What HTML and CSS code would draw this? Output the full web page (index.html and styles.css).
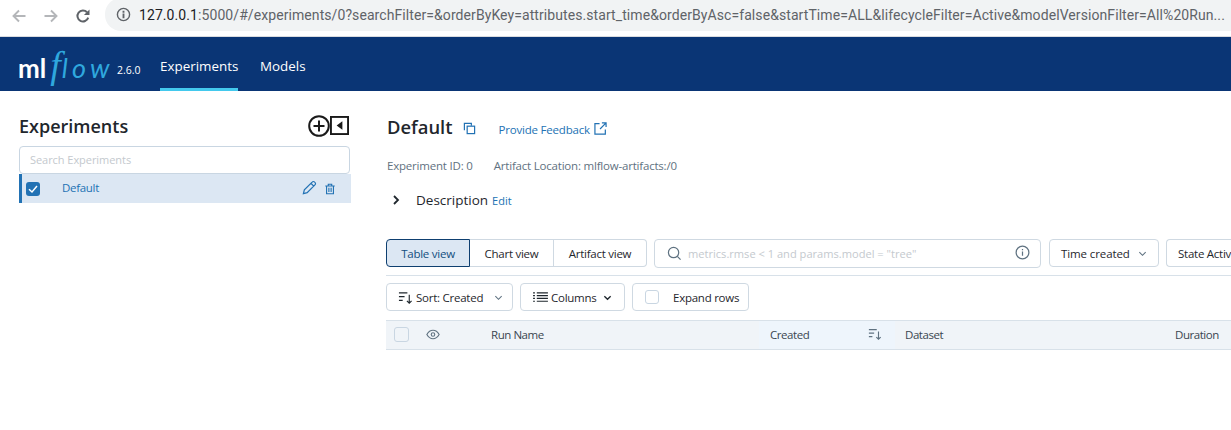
FILE: index.html
```html
<!DOCTYPE html>
<html lang="en">
<head>
<meta charset="utf-8">
<title>MLflow</title>
<link rel="stylesheet" href="styles.css">
</head>
<body>
<div class="chrome">
  <svg class="nav-icon" viewBox="0 0 16 16"><path d="M14.5 8H2.5M8 2.5 2.5 8 8 13.5" class="st-light"/></svg>
  <svg class="nav-icon nav-fwd" viewBox="0 0 16 16"><path d="M1.5 8h12M8 2.5 13.5 8 8 13.5" class="st-light"/></svg>
  <svg class="nav-icon nav-reload" viewBox="0 0 16 16"><path d="M13.2 9.6A5.5 5.5 0 1 1 12 4.2" class="st-dark"/><path d="M14.5 1.5v5.6H8.9z" class="fill-dark"/></svg>
  <div class="omnibox">
    <svg class="info-icon" viewBox="0 0 16 16"><circle cx="8" cy="8" r="6.5" class="st-thin"/><path d="M7 7h2v5H7zM7 4h2v2H7z" class="fill-dark"/></svg>
    <span class="url"><span class="url-dark">127.0.0.1</span>:5000/#/experiments/0?searchFilter=&amp;orderByKey=attributes.start_time&amp;orderByAsc=false&amp;startTime=ALL&amp;lifecycleFilter=Active&amp;modelVersionFilter=All%20Run...</span>
  </div>
</div>
<header class="topbar">
  <div class="logo"><span class="logo-ml">ml</span><span class="logo-f">f</span><span class="logo-flow">low</span></div>
  <span class="version">2.6.0</span>
  <nav class="tabs">
    <a class="tab tab-active">Experiments</a>
    <a class="tab">Models</a>
  </nav>
</header>
<div class="page">
  <aside class="sidebar">
    <div class="side-head">
      <h2 class="side-title">Experiments</h2>
      <div class="side-actions">
        <svg class="plus-icon" viewBox="0 0 22 22"><circle cx="11" cy="11" r="9.8" class="st-black"/><path d="M11 5.5v11M5.5 11h11" class="st-black"/></svg>
        <svg class="collapse-icon" viewBox="0 0 20 20"><rect x="1" y="1" width="18" height="18" class="st-black"/><path d="M13 5.5v9L7 10z" class="fill-black"/></svg>
      </div>
    </div>
    <div class="side-search">Search Experiments</div>
    <div class="exp-row">
      <span class="check"><svg viewBox="0 0 14 14"><path d="M3 7.2 6 10l5-6" class="st-white"/></svg></span>
      <span class="exp-name">Default</span>
      <svg class="pencil" viewBox="0 0 16 16"><path d="M1.5 14.5 2.5 10.5 10.8 2.2a1.8 1.8 0 0 1 2.7 0l.3.3a1.8 1.8 0 0 1 0 2.7L5.500 13.500zM9.500 3.500l3 3" class="st-blue"/></svg>
      <svg class="trash" viewBox="0 0 14 14"><path d="M1.500 3.500h11M5 3.500V1.500h4v2M3 3.500v9h8v-9M5.700 5.500v5M8.300 5.500v5" class="st-blue"/></svg>
    </div>
  </aside>
  <main class="main">
    <div class="title-row">
      <h1 class="exp-title">Default</h1>
      <svg class="copy-icon" viewBox="0 0 14 14"><path d="M1.500 9V1.500H9V4" class="st-blue"/><rect x="4.500" y="4.500" width="8" height="8" class="st-blue"/></svg>
      <a class="feedback">Provide Feedback</a>
      <svg class="ext-icon" viewBox="0 0 14 14"><path d="M6 1.800H1v11.200h11.200V8M8.500 1h4.500v4.500M13 1 6.500 7.500" class="st-blue"/></svg>
    </div>
    <div class="meta"><span>Experiment ID: 0</span><span>Artifact Location: mlflow-artifacts:/0</span></div>
    <div class="desc">
      <svg class="chev-right" viewBox="0 0 10 10"><path d="M3 1l4 4-4 4" class="st-chev"/></svg>
      <span class="desc-label">Description</span><a class="edit">Edit</a>
    </div>
    <div class="toolbar">
      <div class="segments">
        <span class="segment segment-on">Table view</span>
        <span class="segment seg-chart">Chart view</span>
        <span class="segment seg-artifact">Artifact view</span>
      </div>
      <div class="run-search">
        <svg class="search-icon" viewBox="0 0 16 16"><circle cx="7" cy="7" r="5.500" class="st-grey"/><path d="M11 11l3.500 3.500" class="st-grey"/></svg>
        <span class="run-placeholder">metrics.rmse &lt; 1 and params.model = "tree"</span>
        <svg class="hint-icon" viewBox="0 0 16 16"><circle cx="8" cy="8" r="6.800" class="st-grey"/><path d="M8 7v4.500M8 4.200v1.300" class="st-grey"/></svg>
      </div>
      <span class="btn btn-time">Time created<svg class="chev" viewBox="0 0 10 10"><path d="M1.500 3.500 5 7l3.500-3.500" class="st-chev-thin"/></svg></span>
      <span class="btn btn-state">State Active</span>
    </div>
    <div class="controls">
      <span class="btn btn-sort">
        <svg class="sort-icon" viewBox="0 0 16 16"><path d="M1 3h9M1 7h6M1 11h4M12 5v9M9.500 11.500 12 14l2.500-2.500" class="st-dark-thin"/></svg>
        Sort: Created
        <svg class="chev chev-sort" viewBox="0 0 10 10"><path d="M1.500 3.500 5 7l3.500-3.500" class="st-chev-thin"/></svg>
      </span>
      <span class="btn btn-cols">
        <svg class="cols-icon" viewBox="0 0 16 14"><path d="M0 2h2M4 2h12M0 5h2M4 5h12M0 8h2M4 8h12M0 11h2M4 11h12" class="st-dark-thin"/></svg>
        Columns
        <svg class="chev" viewBox="0 0 10 10"><path d="M1.500 3.500 5 7l3.500-3.500" class="st-chev-bold"/></svg>
      </span>
      <span class="btn btn-expand"><span class="box"></span>Expand rows</span>
    </div>
    <div class="thead">
      <span class="cell cell-check"><span class="box box-head"></span></span>
      <span class="cell cell-eye"><svg class="eye" viewBox="0 0 16 12"><path d="M1 6c1.800-3.200 4.200-4.800 7-4.800s5.200 1.600 7 4.800c-1.800 3.200-4.200 4.800-7 4.800S2.800 9.200 1 6z" class="st-grey"/><circle cx="8" cy="6" r="2" class="st-grey"/></svg></span>
      <span class="cell cell-name">Run Name</span>
      <span class="cell cell-created">Created<svg class="sort-small" viewBox="0 0 16 16"><path d="M1 3h9M1 7h6M1 11h4M12 5v9M9.500 11.500 12 14l2.500-2.500" class="st-grey"/></svg></span>
      <span class="cell cell-dataset">Dataset</span>
      <span class="cell cell-duration">Duration</span>
    </div>
  </main>
</div>
</body>
</html>
```
FILE: styles.css
```css
* { box-sizing: border-box; }
html, body { margin: 0; padding: 0; }
body {
  width: 1231px;
  height: 430px;
  overflow: hidden;
  background: #fff;
  font-family: "Open Sans", "Noto Sans", sans-serif;
  color: #1f272d;
}
svg { display: block; flex: none; fill: none; }

.st-light { stroke: #b4b6b9; stroke-width: 1.9; }
.st-dark { stroke: #5f6368; stroke-width: 2; }
.st-thin { stroke: #5f6368; stroke-width: 1.5; }
.fill-dark { fill: #5f6368; }
.st-black { stroke: #1a1a1a; stroke-width: 2; }
.fill-black { fill: #1a1a1a; }
.st-white { stroke: #fff; stroke-width: 1.5; }
.st-blue { stroke: #2272b4; stroke-width: 1.300; }
.st-chev { stroke: #1f272d; stroke-width: 1.800; }
.st-chev-thin { stroke: #5f7281; stroke-width: 1.200; }
.st-chev-bold { stroke: #1f272d; stroke-width: 1.500; }
.st-grey { stroke: #5f7281; stroke-width: 1.300; }
.st-dark-thin { stroke: #1f272d; stroke-width: 1.200; }

/* browser chrome */
.chrome {
  height: 37px;
  display: flex;
  align-items: center;
  border-bottom: 1px solid #dadce0;
  padding-bottom: 5px;
}
.nav-icon { width: 16px; height: 16px; margin-left: 11px; }
.nav-fwd { margin-left: 16px; }
.nav-reload { margin-left: 16px; }
.omnibox {
  flex: 1;
  height: 33px;
  margin-left: 14px;
  padding-left: 11px;
  margin-top: -2px;
  margin-right: -40px;
  background: #f1f3f4;
  border-radius: 16px 0 0 16px;
  display: flex;
  align-items: center;
  overflow: hidden;
  white-space: nowrap;
}
.info-icon { width: 15px; height: 15px; flex: none; }
.url { margin-left: 8px; font-size: 14px; letter-spacing: .08px; color: #5f6368; font-family: Roboto, sans-serif; }
.url-dark { color: #202124; }

/* header */
.topbar {
  height: 54px;
  background: #0a3575;
  display: flex;
  align-items: center;
  padding-left: 18px;
  color: #fff;
}
.logo { display: flex; align-items: baseline; width: 99px; line-height: 1; margin-top: 2px; }
.logo-ml { font: 700 26px/1 Lato, sans-serif; color: #fff; }
.logo-f { font: italic 400 38px/1 "Liberation Serif", serif; color: #2fa8de; margin-left: 4px; }
.logo-flow { font: italic 400 27px/1 Lato, sans-serif; color: #2fa8de; letter-spacing: 4.200px; margin-left: 1px; }
.version { font-size: 10.500px; width: 43px; margin-top: 11px; }
.tabs { display: flex; align-self: stretch; }
.tab {
  display: flex;
  align-items: center;
  font-size: 13.400px;
  font-weight: 500;
  height: 54px;
  padding-top: 6px;
  margin-right: 22px;
  border-bottom: 3px solid transparent;
  color: #fff;
}
.tab-active { border-bottom-color: #43c9ed; width: 78px; }

/* layout */
.page { display: flex; }
.sidebar { width: 386px; padding: 20px 35px 0 19px; flex: none; }
.main { flex: 1; min-width: 0; overflow: hidden; padding-top: 22px; }

/* sidebar */
.side-head { display: flex; justify-content: space-between; align-items: center; height: 35px; padding-right: 2px; }
.side-title { margin: -6px 0 0; font-size: 18px; font-weight: 600; line-height: 30px; }
.side-actions { display: flex; align-items: center; margin-top: -6px; }
.plus-icon { width: 22px; height: 22px; }
.collapse-icon { width: 19px; height: 19px; }
.side-search {
  height: 28px;
  width: 331px;
  border: 1px solid #c9d6e2;
  border-radius: 4px;
  padding-left: 10px;
  font-size: 11px;
  line-height: 26px;
  letter-spacing: -.05px;
  color: #c4c9ce;
}
.exp-row {
  height: 29px;
  width: 332px;
  background: #dce7f3;
  border-left: 3px solid #2272b4;
  display: flex;
  align-items: center;
  color: #2272b4;
}
.check {
  width: 14px; height: 14px;
  margin-left: 4px;
  background: #2272b4;
  border-radius: 3px;
  display: flex;
}
.check svg { width: 14px; height: 14px; }
.exp-name { font-size: 11.500px; letter-spacing: -.3px; margin-left: 22px; margin-top: -2px; flex: 1; }
.pencil { width: 15px; height: 15px; margin-top: -2px; }
.trash { width: 12px; height: 12px; margin-left: 7px; margin-right: 15px; }

/* main */
.title-row { display: flex; align-items: center; height: 28px; }
.exp-title { margin: -2px 0 0; font-size: 18.400px; font-weight: 600; padding-left: 1px; }
.copy-icon { width: 13px; height: 13px; margin-left: 11px; margin-top: 3px; }
.feedback { font-size: 11.500px; letter-spacing: -.2px; color: #2272b4; margin-left: 22px; margin-top: 4px; }
.ext-icon { width: 13px; height: 13px; margin-left: 4px; margin-top: 2px; }
.meta { display: flex; gap: 21px; font-size: 11.500px; letter-spacing: -.2px; color: #5f7281; margin-top: 17px; line-height: 16px; padding-left: 1px; }
.desc { display: flex; align-items: center; height: 20px; margin-top: 16px; }
.chev-right { width: 10px; height: 10px; margin-left: 5px; }
.desc-label { font-size: 13.500px; margin-left: 15px; }
.edit { font-size: 11px; color: #2272b4; margin-left: 4px; }

.toolbar { display: flex; align-items: center; margin-top: 29px; width: 860px; height: 29px; padding-bottom: 1px; }
.segments { display: flex; height: 28px; font-size: 11.500px; letter-spacing: -.25px; white-space: nowrap; }
.segment {
  display: flex;
  align-items: center;
  justify-content: center;
  border: 1px solid #cfd9e2;
  border-left-width: 0;
}
.segment-on {
  width: 84px;
  background: #dce7f3;
  border: 1px solid #0e3f70;
  border-radius: 4px 0 0 4px;
  color: #134f7f;
}
.seg-chart { width: 84px; }
.seg-artifact { width: 93px; border-radius: 0 4px 4px 0; }
.run-search {
  width: 387px;
  height: 29px;
  margin-left: 7px;
  border: 1px solid #cfd9e2;
  border-radius: 4px;
  display: flex;
  align-items: center;
  padding: 0 10px 0 12px;
}
.search-icon { width: 15px; height: 15px; }
.run-placeholder { flex: 1; font-size: 11.100px; color: #c4c9ce; margin-left: 6px; white-space: nowrap; }
.hint-icon { width: 15px; height: 15px; margin-top: -2px; }
.btn {
  display: inline-flex;
  align-items: center;
  height: 28px;
  border: 1px solid #cfd9e2;
  border-radius: 4px;
  font-size: 11.500px;
  letter-spacing: -.25px;
  flex: none;
  white-space: nowrap;
}
.btn-time { width: 110px; margin-left: 8px; padding-left: 11px; gap: 8px; letter-spacing: -.1px; }
.btn-state { margin-left: 7px; padding-left: 11px; width: 65px; overflow: hidden; border-right: 0; border-radius: 4px 0 0 4px; }
.chev { width: 9px; height: 9px; }

.controls {
  display: flex;
  gap: 7px;
  border-top: 1px solid #d8e1e9;
  margin-top: 7px;
  padding-top: 7px;
  height: 45px;
}
.btn-sort { width: 127px; padding-left: 11px; }
.sort-icon { width: 15px; height: 15px; margin-right: 3px; }
.chev-sort { margin-left: 11px; }
.btn-cols { width: 105px; padding-left: 12px; }
.cols-icon { width: 15px; height: 13px; margin-right: 3px; }
.btn-cols .chev { margin-left: 6px; }
.btn-expand { width: 117px; padding-left: 12px; }
.box {
  display: block;
  width: 14px; height: 14px;
  border: 1px solid #c9d6e2;
  border-radius: 3px;
  background: #fff;
  margin-right: 14px;
}
.thead {
  display: grid;
  grid-template-columns: 40px 65px 268px 136px 280px 1fr;
  height: 30px;
  background: #f0f4f8;
  border-top: 1px solid #d8e1e9;
  border-bottom: 1px solid #d8e1e9;
  font-size: 11.500px;
  letter-spacing: -.45px;
  color: #3a4650;
  width: 845px;
  align-items: stretch;
}
.cell { display: flex; align-items: center; padding-bottom: 2px; }
.cell-check { padding-left: 8px; }
.box-head { margin: 0; background: #f0f4f8; width: 15px; height: 15px; }
.eye { width: 14px; height: 11px; }
.cell-created { background: #eef5fc; padding-left: 11px; padding-right: 13px; justify-content: space-between; }
.sort-small { width: 14px; height: 14px; }
.cell-dataset { padding-left: 10px; }
```
